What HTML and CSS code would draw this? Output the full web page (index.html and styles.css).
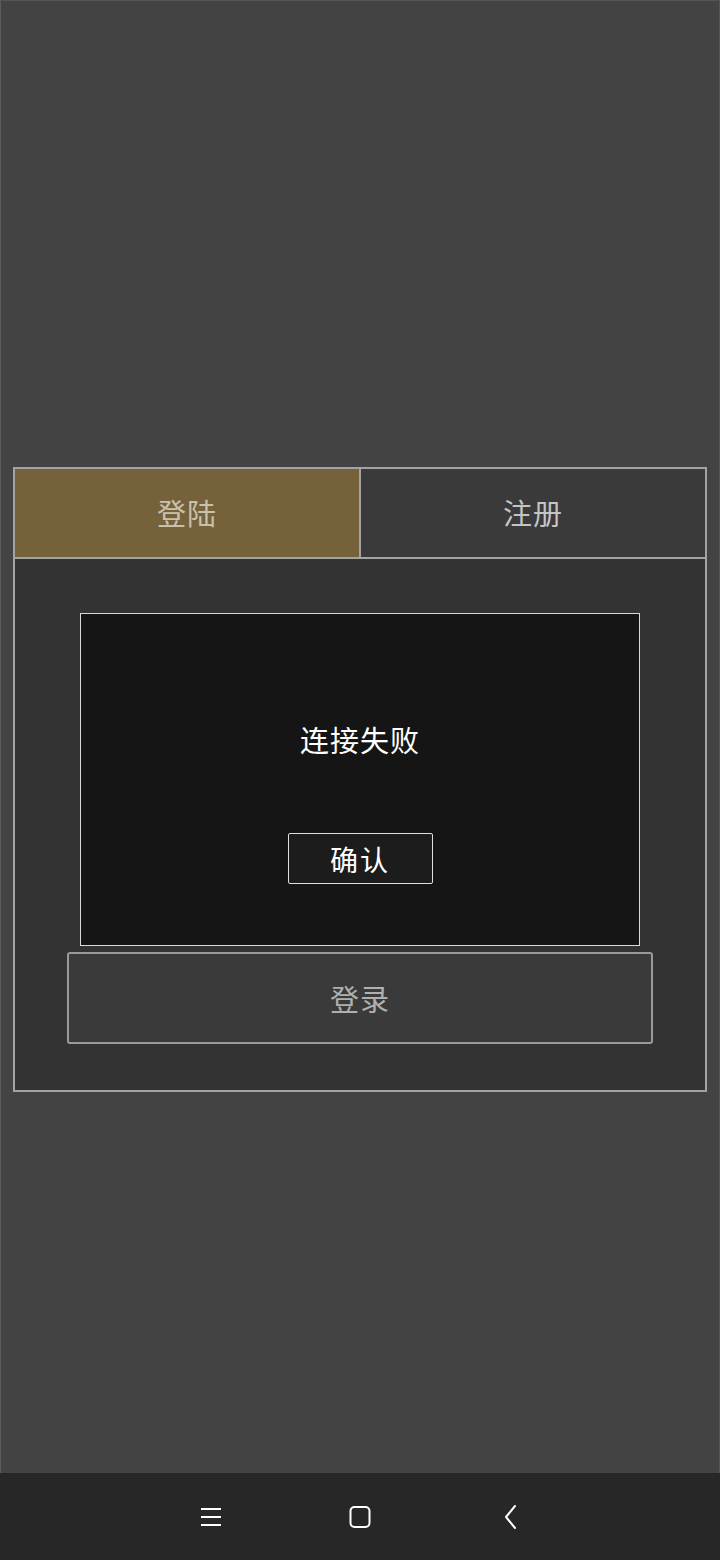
FILE: index.html
```html
<!DOCTYPE html>
<html lang="zh">
<head>
<meta charset="utf-8">
<link rel="stylesheet" href="styles.css">
</head>
<body>
<div class="screen">
  <main class="main">
    <div class="card">
      <div class="tabs">
        <div class="tab tab-active">登陆</div>
        <div class="tab">注册</div>
      </div>
      <div class="panel">
        <div class="spacer"></div>
        <div class="login-btn">登录</div>
        <div class="dialog">
          <div class="dialog-msg">连接失败</div>
          <div class="dialog-btn">确认</div>
        </div>
      </div>
    </div>
  </main>
  <nav class="navbar">
    <svg class="nav-icon nav-menu" width="22" height="22" viewBox="0 0 22 22">
      <path d="M1 3H21M1 11H21M1 19H21" stroke="#fff" stroke-width="2" fill="none"/>
    </svg>
    <svg class="nav-icon nav-home" width="24" height="24" viewBox="0 0 24 24">
      <rect x="2.5" y="2" width="19" height="20" rx="4" stroke="#fff" stroke-width="2" fill="none"/>
    </svg>
    <svg class="nav-icon nav-back" width="16" height="26" viewBox="0 0 16 26">
      <path d="M12 2L3 13L12 24" stroke="#fff" stroke-width="2" fill="none" stroke-linecap="round" stroke-linejoin="round"/>
    </svg>
  </nav>
</div>
</body>
</html>
```

FILE: styles.css
```css
* { box-sizing: border-box; }
html, body {
  margin: 0;
  padding: 0;
  background: #434343;
}
body {
  font-family: "Noto Sans CJK SC", "Noto Sans", sans-serif;
}
.screen {
  width: 720px;
  height: 1560px;
  display: flex;
  flex-direction: column;
  border-left: 1px solid #5c5c5c;
  border-top: 1px solid #555;
  border-right: 1px solid #555;
  background: #434343;
}
.main {
  flex: 1;
  padding-top: 466px;
  padding-left: 12px;
  padding-right: 13px;
}
.card {
  width: 694px;
}
.tabs {
  display: flex;
  height: 92px;
}
.tab {
  flex: 1;
  display: flex;
  align-items: center;
  justify-content: center;
  background: #3a3a3a;
  border: 2px solid #a3a3a3;
  color: #c4c4c4;
  font-size: 29px;
  letter-spacing: 1px;
  padding-bottom: 2px;
}
.tab-active {
  background: #75623a;
  color: #c9c1ae;
  border-right-width: 1px;
}
.tab + .tab {
  border-left-width: 1px;
}
.panel {
  position: relative;
  background: #333333;
  border: 2px solid #a3a3a3;
  border-top: none;
  padding: 0 52px 46px 52px;
}
.spacer {
  height: 393px;
}
.login-btn {
  height: 92px;
  border: 2px solid #9a9a9a;
  border-radius: 3px;
  background: #3a3a3a;
  color: #b0b0b0;
  font-size: 29px;
  letter-spacing: 1px;
  display: flex;
  align-items: center;
  justify-content: center;
}
.dialog {
  position: absolute;
  left: 65px;
  top: 54px;
  width: 560px;
  height: 333px;
  background: #151515;
  border: 1.5px solid #d8d8d8;
  display: flex;
  flex-direction: column;
  align-items: center;
}
.dialog-msg {
  margin-top: 103px;
  color: #ffffff;
  font-size: 29px;
  line-height: 44px;
  letter-spacing: 1px;
}
.dialog-btn {
  margin-top: 72px;
  width: 145px;
  height: 51px;
  border: 1.5px solid #e0e0e0;
  border-radius: 2px;
  background: #1c1c1c;
  color: #ffffff;
  font-size: 28px;
  letter-spacing: 2px;
  display: flex;
  align-items: center;
  justify-content: center;
}
.navbar {
  height: 87px;
  background: #272727;
  display: flex;
  align-items: center;
  margin: 0 -1px;
  padding-left: 200px;
}
.nav-icon {
  display: block;
}
.nav-home {
  margin-left: 126px;
}
.nav-back {
  margin-left: 131px;
}
```
